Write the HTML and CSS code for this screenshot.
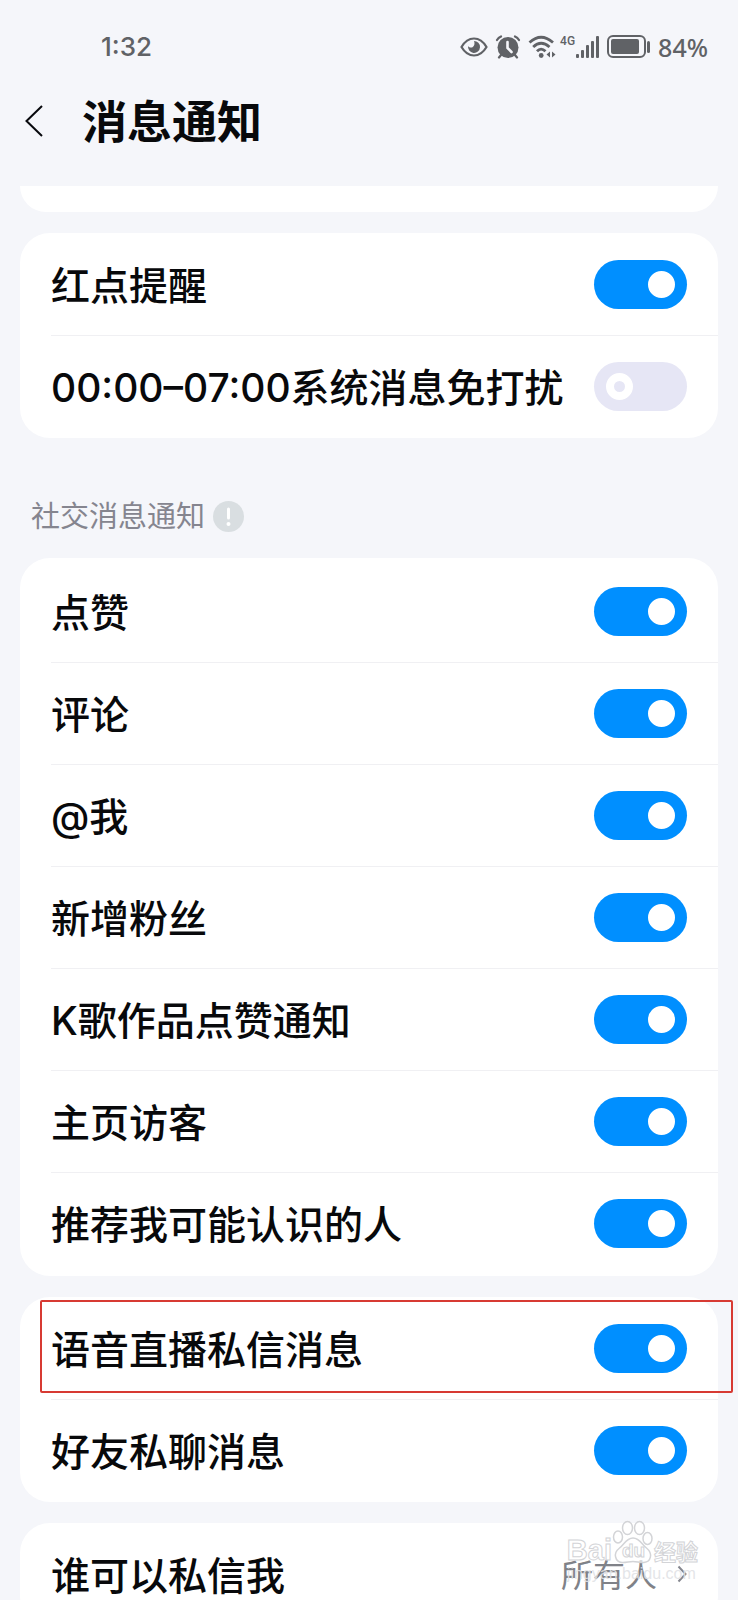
FILE: index.html
```html
<!DOCTYPE html>
<html lang="zh-CN">
<head>
<meta charset="utf-8">
<meta name="viewport" content="width=device-width, initial-scale=1">
<title>消息通知</title>
<link rel="stylesheet" href="styles.css">
</head>
<body>
<div class="screen">
  <div class="status">
    <span class="status-time">1:32</span>
    <div class="status-icons">
      <svg width="28" height="22" viewBox="0 0 28 22" fill="none" stroke="#606266" stroke-width="2.200"><path d="M1.500 11C5 5 9 2.500 14 2.500S23 5 26.500 11C23 17 19 19.500 14 19.500S5 17 1.500 11Z"/><path d="M14 5a6 6 0 1 1-5.900 5c1 1.500 3 2 4.400 1.200C14.500 10 15 7.500 14 5Z" fill="#606266" stroke="none"/></svg>
      <svg width="26" height="24" viewBox="0 0 26 24" fill="none" stroke="#606266" stroke-linecap="round"><circle cx="13" cy="12.500" r="10.500" fill="#606266" stroke="none"/><path d="M2 5Q3.500 2.500 6 1.500M24 5Q22.500 2.500 20 1.500M6 20l-2 2.500M20 20l2 2.500" stroke-width="2.200"/><path d="M12.500 7v6l4 4" stroke="#f5f6fa" stroke-width="2.600"/></svg>
      <svg width="28" height="24" viewBox="0 0 28 24" fill="none" stroke="#606266" stroke-width="2.800"><path d="M1.500 7.500Q13 -3 25 7.500M5.200 12Q13 4.500 21.500 12M9 16.300Q13 12 17.500 16.300"/><circle cx="13.200" cy="20.500" r="2.400" fill="#606266" stroke="none"/><path d="M22 16.500v6l-3.500-3ZM24 16.500v6l3.500-3Z" fill="#606266" stroke="none"/></svg>
      <div class="signal"><span class="signal-label">4G</span><svg width="25" height="24" viewBox="0 0 25 24" fill="#606266"><rect x="1" y="19" width="3" height="4" rx="1"/><rect x="6" y="15" width="3" height="8" rx="1"/><rect x="11" y="10" width="3" height="13" rx="1"/><rect x="16" y="6" width="3" height="17" rx="1"/><rect x="21" y="1" width="3" height="22" rx="1"/></svg></div>
      <svg class="battery" width="44" height="24" viewBox="0 0 44 24"><rect x="1" y="1" width="37" height="21" rx="5" fill="none" stroke="#606266" stroke-width="2"/><rect x="4" y="4" width="28" height="15" rx="2" fill="#606266"/><rect x="40" y="6" width="3" height="12" rx="1.500" fill="#606266"/></svg>
      <span class="status-percent">84%</span>
    </div>
  </div>
  <header class="topbar">
    <button class="back" type="button" aria-label="返回"><svg width="20" height="34" viewBox="0 0 20 34" fill="none" stroke="#08090d" stroke-width="2"><path d="M18 2 2.500 17 18 32"/></svg></button>
    <h1 class="title">消息通知</h1>
  </header>
  <main class="list">
    <section class="card card-scrolled"></section>
    <section class="card">
      <label class="row"><span class="name">红点提醒</span><input class="switch" type="checkbox" role="switch" checked></label>
      <label class="row"><span class="name">00:00–07:00系统消息免打扰</span><input class="switch" type="checkbox" role="switch"></label>
    </section>
    <div class="group-head">
      <h2 class="group-title">社交消息通知</h2>
      <button class="info" type="button" aria-label="说明"><svg width="31" height="31" viewBox="0 0 31 31"><circle cx="15.500" cy="15.500" r="15.500" fill="#d9dee1"/><path d="M15.500 8v9" stroke="#fff" stroke-width="3" stroke-linecap="round"/><circle cx="15.500" cy="23" r="2" fill="#fff"/></svg></button>
    </div>
    <section class="card card-social">
      <label class="row"><span class="name">点赞</span><input class="switch" type="checkbox" role="switch" checked></label>
      <label class="row"><span class="name">评论</span><input class="switch" type="checkbox" role="switch" checked></label>
      <label class="row"><span class="name">@我</span><input class="switch" type="checkbox" role="switch" checked></label>
      <label class="row"><span class="name">新增粉丝</span><input class="switch" type="checkbox" role="switch" checked></label>
      <label class="row"><span class="name">K歌作品点赞通知</span><input class="switch" type="checkbox" role="switch" checked></label>
      <label class="row"><span class="name">主页访客</span><input class="switch" type="checkbox" role="switch" checked></label>
      <label class="row"><span class="name">推荐我可能认识的人</span><input class="switch" type="checkbox" role="switch" checked></label>
    </section>
    <section class="card">
      <label class="row row-marked"><span class="name">语音直播私信消息</span><input class="switch" type="checkbox" role="switch" checked></label>
      <label class="row"><span class="name">好友私聊消息</span><input class="switch" type="checkbox" role="switch" checked></label>
    </section>
    <section class="card">
      <a class="row" href="#who"><span class="name">谁可以私信我</span><span class="value">所有人</span><svg class="chevron" width="10" height="18" viewBox="0 0 10 18" fill="none" stroke="#85878f" stroke-width="2"><path d="M1.500 1.500 8.500 9 1.500 16.500"/></svg></a>
    </section>
  </main>
  <div class="watermark">
    <div class="wm-brand">
      <span class="wm-latin">Bai</span>
      <span class="wm-paw"><svg width="42" height="44" viewBox="0 0 42 44" fill="#fff" fill-opacity=".7" stroke="#d3d4d7" stroke-width="1.500"><ellipse cx="6" cy="17" rx="4.500" ry="6"/><ellipse cx="15.500" cy="8" rx="5" ry="6.500"/><ellipse cx="27.500" cy="8" rx="5" ry="6.500"/><ellipse cx="35.500" cy="18.500" rx="4.500" ry="6"/><path d="M21 18C14 18 12 25 7 28.500 1 33 3 42 10 42.500c4 .3 7-1 11-1s7 1.300 11 1c7-.5 9-9 3-14C30 25 28 18 21 18Z"/></svg><span class="wm-du">du</span></span>
      <span class="wm-cjk">经验</span>
    </div>
    <span class="wm-url">jingyan.baidu.com</span>
  </div>
</div>
</body>
</html>
```
FILE: styles.css
```css
*, *::before, *::after { box-sizing: border-box; }

body {
  margin: 0;
  background: #f5f6fa;
  color: #08090b;
  font-family: Inter, "Noto Sans CJK SC", sans-serif;
}

.screen {
  position: relative;
  display: flex;
  flex-direction: column;
  height: 100vh;
  overflow: hidden;
}

.status {
  display: flex;
  justify-content: space-between;
  align-items: center;
  height: 76px;
  padding: 17px 30px 0 101px;
  color: #606266;
}

.status-time { font: 500 26px/32px Inter, sans-serif; }

.status-percent { font: 500 25px/30px "Noto Sans", sans-serif; }

.status-icons { display: flex; align-items: center; gap: 7px; }

.signal {
  display: flex;
  align-items: flex-start;
  margin-left: -3px;
}

.signal-label { font: 500 12px/12px Roboto, sans-serif; }

.status-icons svg { display: block; flex: none; }

.topbar {
  display: flex;
  align-items: center;
  gap: 38px;
  height: 110px;
  flex: none;
  padding: 0 24px 20px;
}

.back, .info {
  padding: 0;
  border: 0;
  background: none;
}

.back svg, .info svg { display: block; }

.title {
  margin: 0;
  padding-top: 4px;
  font-size: 45px;
  line-height: 60px;
  font-weight: 700;
}

.list {
  flex: 1;
  min-height: 0;
  padding: 0 20px;
  overflow-y: auto;
  scrollbar-width: none;
}

.card {
  margin-bottom: 21px;
  padding-bottom: 1px;
  border-radius: 30px;
  background: #fff;
}

.card-scrolled {
  height: 26px;
  border-radius: 0 0 30px 30px;
}

.card-social { padding: 2px 0; }

.row {
  position: relative;
  display: flex;
  align-items: center;
  height: 102px;
  padding: 0 31px;
  color: inherit;
  text-decoration: none;
}

.row + .row::before {
  content: "";
  position: absolute;
  top: 0;
  left: 31px;
  right: 0;
  height: 1px;
  background: #f0f0f3;
}

.name {
  flex: 1;
  padding-top: 4px;
  font-size: 39px;
  line-height: 54px;
  font-weight: 500;
  white-space: nowrap;
}

.switch {
  appearance: none;
  flex: none;
  display: flex;
  align-items: center;
  width: 93px;
  height: 49px;
  margin: 0;
  padding: 0 12px;
  border-radius: 25px;
  background: #e6e6f5;
}

.switch::before {
  content: "";
  width: 27px;
  height: 27px;
  border: 8px solid #fff;
  border-radius: 50%;
}

.switch:checked {
  justify-content: flex-end;
  background: #008fff;
}

.switch:checked::before { background: #fff; }

.row-marked::after {
  content: "";
  position: absolute;
  inset: 3px -15px 6px 20px;
  border: 2px solid #d73a33;
  border-radius: 2px;
}

.group-head {
  display: flex;
  align-items: center;
  gap: 8px;
  height: 99px;
  padding: 16px 11px 0;
}

.group-title {
  margin: 0;
  color: #85858f;
  font-size: 29px;
  line-height: 40px;
  font-weight: 400;
}

.value {
  padding-top: 4px;
  color: #808288;
  font-size: 32px;
  line-height: 48px;
}

.chevron { margin: 0 0 0 20px; }

.watermark {
  position: absolute;
  right: 40px;
  bottom: 16px;
  display: flex;
  flex-direction: column;
  color: rgba(255, 255, 255, 0.7);
}

.wm-brand {
  display: flex;
  align-items: flex-end;
  -webkit-text-stroke: 1px #d3d4d7;
}

.wm-latin { font: 700 29px/28px "Liberation Sans", sans-serif; }

.wm-paw { position: relative; }

.wm-paw svg { display: block; }

.wm-du {
  position: absolute;
  left: 10px;
  bottom: 2px;
  font: 700 19px/22px "Liberation Sans", sans-serif;
}

.wm-cjk { font: 700 22px/28px "Noto Sans CJK SC", sans-serif; }

.wm-url {
  color: rgba(225, 226, 229, 0.9);
  font: 400 16px/20px "Liberation Sans", sans-serif;
}
```
